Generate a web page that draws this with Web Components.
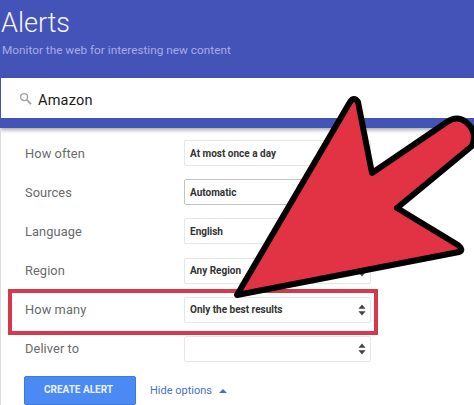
<!DOCTYPE html>
<html><head><meta charset="utf-8"><style>
html,body{margin:0;padding:0;background:#fff;}
body{width:474px;height:405px;overflow:hidden;font-family:Roboto,"Liberation Sans",sans-serif;}
</style></head><body>
<alerts-page>
  <alerts-header title-text="Alerts" sub-text="Monitor the web for interesting new content"></alerts-header>
  <alerts-search value="Amazon"></alerts-search>
  <alerts-form>
    <option-row label="How often" value="At most once a day"></option-row>
    <option-row label="Sources" value="Automatic" strong></option-row>
    <option-row label="Language" value="English"></option-row>
    <option-row label="Region" value="Any Region"></option-row>
    <option-row label="How many" value="Only the best results"></option-row>
    <option-row label="Deliver to" value=""></option-row>
    <form-actions slot="actions"></form-actions>
  </alerts-form>
  <pointer-arrow></pointer-arrow>
</alerts-page>
<script>
function def(name, css, html, init){
  customElements.define(name, class extends HTMLElement{
    connectedCallback(){
      if(this.shadowRoot) return;
      const r=this.attachShadow({mode:'open'});
      r.innerHTML='<style>'+css+'</style>'+html;
      if(init) init(this,r);
    }
  });
}
def('alerts-page',`:host{display:block;position:relative;width:474px;height:405px;overflow:hidden;background:#fff}`,`<slot></slot>`);
def('alerts-header',`:host{display:block;height:78px;background:#4453b8;color:#fff;padding:4px 0 0 1px;box-sizing:border-box}
h1{margin:0;font:300 27px/38px Roboto,sans-serif;color:#f4f5fc}
p{margin:0;font:400 11.8px/16px Roboto,sans-serif;color:#a6aee0;white-space:nowrap;padding-left:1px}`,
`<h1></h1><p></p>`,(e,r)=>{r.querySelector('h1').textContent=e.getAttribute('title-text');r.querySelector('p').textContent=e.getAttribute('sub-text');});
def('alerts-search',`:host{display:block;background:#4453b8;padding:0 0 10px 1px;box-shadow:0 2px 4px rgba(60,60,70,.45);position:relative}
div{height:40px;background:#fff;display:flex;align-items:center;padding-left:18px;gap:6px}
svg{width:13px;height:13px;flex:none}
span{font:400 14.5px/20px Roboto,sans-serif;color:#1a1a1a;letter-spacing:.2px;padding-top:6px}`,
`<div><svg viewBox="0 0 14 14" fill="none" stroke="#a3a3a3"><circle cx="5.5" cy="5.5" r="3.8" stroke-width="1.5"/><path d="M8.4 8.4 13 13" stroke-width="2"/></svg><span></span></div>`,
(e,r)=>{r.querySelector('span').textContent=e.getAttribute('value');});
def('alerts-form',`:host{display:block;position:relative;padding:12px 0 0 23px;border-left:1px solid #dcdcdc}
.rows{display:grid;row-gap:13.2px;width:347px}
.box{position:absolute;left:7px;top:161px;width:362px;height:38px;border:4px solid #d8394a;pointer-events:none}
.act{margin-top:14px}`,
`<div class="rows"><slot></slot></div><div class="box"></div><div class="act"><slot name="actions"></slot></div>`);
def('option-row',`:host{display:grid;grid-template-columns:160px 187px;align-items:center;height:26px}
.l{font:400 12.8px/16px Roboto,sans-serif;color:#6a6a6a;letter-spacing:.1px;padding:1px 0 0 1px}
.s{box-sizing:border-box;height:26px;border:1px solid #e6e6e6;border-radius:2px;background:#fff;display:flex;align-items:center;justify-content:space-between;padding:0 4px 0 5px;font:700 10px/12px Roboto,sans-serif;color:#333}
.v{padding-top:1px}
:host([strong]) .s{border-color:#c4c4c4}
svg{width:8px;height:12px;flex:none}`,
`<span class="l"></span><div class="s"><span class="v"></span><svg viewBox="0 0 8 12" fill="#444"><path d="M4 .5 7.6 4.8H.4z"/><path d="M4 11.5.4 7.2h7.2z"/></svg></div>`,
(e,r)=>{r.querySelector('.l').textContent=e.getAttribute('label');r.querySelector('.v').textContent=e.getAttribute('value');});
def('form-actions',`:host{display:flex;align-items:center;gap:14px}
button{box-sizing:border-box;width:112px;height:29px;border:1px solid #3b78e0;border-radius:2px;background:#4b8af3;color:#eaf1ff;font:700 10px/1 Roboto,sans-serif;padding:0 3px 0 0;letter-spacing:0;margin:0}
a{font:400 11px/14px Roboto,sans-serif;color:#4a6fc4;display:flex;align-items:center;gap:7px;white-space:nowrap;padding-top:1px}
i{display:block;width:0;height:0;border:4px solid transparent;border-top:0;border-bottom:4px solid #4a6fc4}`,
`<button>CREATE ALERT</button><a>Hide options <i></i></a>`);
def('pointer-arrow',`:host{position:absolute;left:0;top:0;width:474px;height:405px;pointer-events:none;display:block}
svg{display:block}`,
`<svg width="474" height="405" viewBox="0 0 474 405"><path d="M237 295 L350 102 Q354 96 358 102 L372 173 L447 122 Q457 115 466 122 Q478 132 472 146 L397 208 L458 245 Q464 250 459 252 Z" fill="#e23344" stroke="#000" stroke-width="6" stroke-linejoin="round"/></svg>`);
</script>
</body></html>
